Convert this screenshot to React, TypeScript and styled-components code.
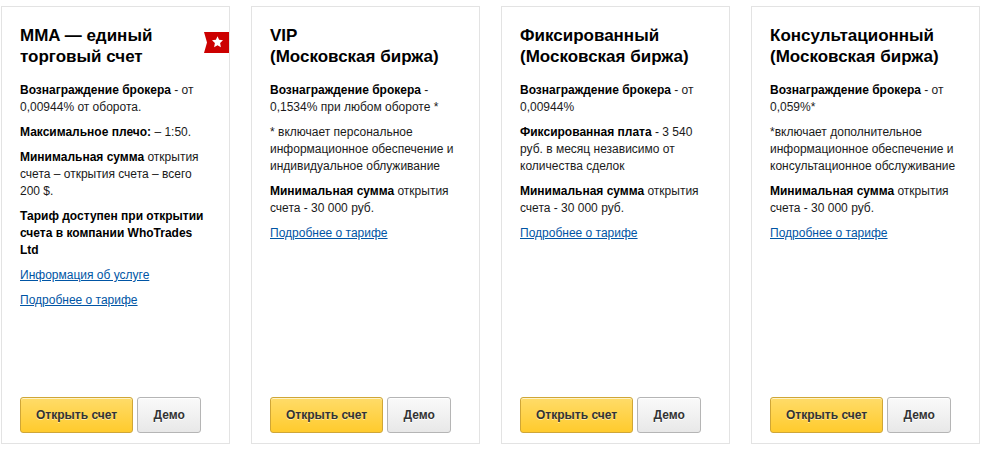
import React from "react";
import styled, { createGlobalStyle } from "styled-components";

const GlobalStyle = createGlobalStyle`
  * { box-sizing: border-box; }
  body {
    margin: 0;
    background: #fff;
    color: #000;
    font-family: "Liberation Sans", Arial, sans-serif;
    font-size: 12px;
    line-height: 17px;
  }
`;

const Tariffs = styled.main`
  display: grid;
  grid-template-columns: repeat(4, minmax(0, 1fr));
  gap: 21px;
  padding: 6px 4px 8px 1px;
`;

const Card = styled.article`
  position: relative;
  display: flex;
  flex-direction: column;
  min-height: 438px;
  padding: 18px 18px 10px;
  border: 1px solid #e3e3e3;
`;

const Title = styled.h2`
  margin: 0 0 15px;
  font-size: 17px;
  line-height: 21px;
  font-weight: bold;
`;

const Text = styled.p`
  margin: 0 0 8px;
  color: #1a1a1a;
  b { color: #000; }
`;

const TextLink = styled.a`
  color: #0055a5;
  text-decoration: underline;
`;

const Actions = styled.div`
  display: flex;
  gap: 4px;
  margin-top: auto;
`;

const Button = styled.button<{ $primary?: boolean }>`
  min-width: 64px;
  height: 36px;
  padding: 0 15px;
  border: 1px solid ${(p) => (p.$primary ? "#cfa637" : "#b5b5b5")};
  border-radius: 3px;
  background: ${(p) => (p.$primary ? "linear-gradient(#ffdc69, #ffcb2d)" : "linear-gradient(#fafafa, #e8e8e8)")};
  box-shadow: inset 0 1px 0 ${(p) => (p.$primary ? "#fff3c8" : "#fff")};
  color: #333;
  font: bold 12px "Liberation Sans", Arial, sans-serif;
  text-shadow: 0 1px 0 ${(p) => (p.$primary ? "#ffe9a0" : "#fff")};
  white-space: nowrap;
  cursor: pointer;
`;

const Ribbon = styled.svg`
  position: absolute;
  top: 25px;
  right: 0;
`;

type Tariff = { title: [string, string]; starred?: boolean; text: React.ReactNode[]; links: string[] };

const minimum = <><b>Минимальная сумма</b> открытия счета - 30 000 руб.</>;

const tariffs: Tariff[] = [
  {
    title: ["MMA — единый", "торговый счет"],
    starred: true,
    text: [
      <><b>Вознаграждение брокера</b> - от 0,00944% от оборота.</>,
      <><b>Максимальное плечо:</b> – 1:50.</>,
      <><b>Минимальная сумма</b> открытия счета – открытия счета – всего 200 $.</>,
      <b>Тариф доступен при открытии счета в компании WhoTrades Ltd</b>,
    ],
    links: ["Информация об услуге", "Подробнее о тарифе"],
  },
  {
    title: ["VIP", "(Московская биржа)"],
    text: [
      <><b>Вознаграждение брокера</b> - 0,1534% при любом обороте *</>,
      "* включает персональное информационное обеспечение и индивидуальное облуживание",
      minimum,
    ],
    links: ["Подробнее о тарифе"],
  },
  {
    title: ["Фиксированный", "(Московская биржа)"],
    text: [
      <><b>Вознаграждение брокера</b> - от 0,00944%</>,
      <><b>Фиксированная плата</b> - 3 540 руб. в месяц независимо от количества сделок</>,
      minimum,
    ],
    links: ["Подробнее о тарифе"],
  },
  {
    title: ["Консультационный", "(Московская биржа)"],
    text: [
      <><b>Вознаграждение брокера</b> - от 0,059%*</>,
      "*включает дополнительное информационное обеспечение и консультационное обслуживание",
      minimum,
    ],
    links: ["Подробнее о тарифе"],
  },
];

export default function App() {
  return (
    <>
      <GlobalStyle />
      <Tariffs>
        {tariffs.map((t) => (
          <Card key={t.title[0]}>
            {t.starred && (
              <Ribbon width="25" height="21" viewBox="0 0 25 21" aria-hidden="true">
                <path fill="#cc0000" d="M0 0h25v21H0l3-10.500z" />
                <path fill="#fff" d="M13.500 4.200l1.600 3.500 3.900.5-2.900 2.700.8 4.300-3.400-2-3.400 2 .8-4.300L8 8.200l3.900-.5z" />
              </Ribbon>
            )}
            <Title>{t.title[0]}<br />{t.title[1]}</Title>
            {t.text.map((x, i) => <Text key={i}>{x}</Text>)}
            {t.links.map((l) => <Text key={l}><TextLink href="#">{l}</TextLink></Text>)}
            <Actions>
              <Button type="button" $primary>Открыть счет</Button>
              <Button type="button">Демо</Button>
            </Actions>
          </Card>
        ))}
      </Tariffs>
    </>
  );
}
